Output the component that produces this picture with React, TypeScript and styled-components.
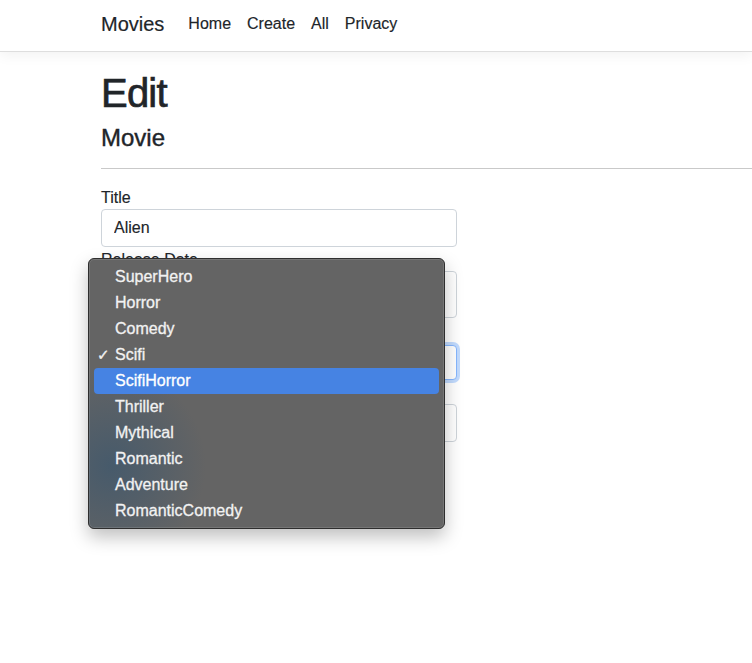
import React from "react";
import styled, { createGlobalStyle } from "styled-components";

const Global = createGlobalStyle`
  html, body { margin: 0; padding: 0; background: #fff; }
  body {
    font-family: "Liberation Sans", Arial, sans-serif;
    color: #212529;
    font-size: 16px;
    line-height: 1.5;
  }
  * { box-sizing: border-box; }
`;

const Page = styled.div`
  position: relative;
  width: 752px;
  height: 663px;
  overflow: hidden;
`;

const NavBar = styled.header`
  height: 52px;
  display: flex;
  align-items: center;
  padding-left: 101px;
  padding-bottom: 4px;
  border-bottom: 1px solid #dedede;
  box-shadow: 0 4px 12px rgba(0, 0, 0, 0.05);
`;

const Brand = styled.span`
  font-size: 20px;
  color: #212529;
  margin-right: 16px;
  line-height: 30px;
  -webkit-text-stroke: 0.2px #212529;
`;

const NavLink = styled.span`
  font-size: 16px;
  color: #212529;
  padding: 0 8px;
  line-height: 24px;
  -webkit-text-stroke: 0.15px #212529;
`;

const Main = styled.main`
  padding-left: 101px;
  padding-top: 17px;
`;

const H1 = styled.h1`
  margin: 0;
  font-size: 40px;
  font-weight: 500;
  line-height: 48px;
  letter-spacing: -0.8px;
  -webkit-text-stroke: 0.7px #212529;
`;

const H4 = styled.h4`
  margin: 6px 0 0;
  font-size: 24px;
  font-weight: 500;
  line-height: 29px;
  -webkit-text-stroke: 0.4px #212529;
`;

const Rule = styled.hr`
  margin: 16px 0 16px;
  border: 0;
  border-top: 1px solid #c9c9c9;
`;

const Form = styled.form`
  width: 356px;
  display: flex;
  flex-direction: column;
`;

const Label = styled.label`
  display: block;
  font-size: 16px;
  line-height: 24px;
  color: #212529;
  padding-top: 1px;
  margin-bottom: -1px;
  -webkit-text-stroke: 0.15px #212529;
`;

const Field = styled.input<{ $h?: number }>`
  display: block;
  width: 100%;
  height: ${(p) => p.$h ?? 38}px;
  padding: 6px 12px;
  font-family: inherit;
  font-size: 16px;
  color: #212529;
  background: #fff;
  border: 1px solid #ced4da;
  border-radius: 4px;
  outline: none;
  -webkit-text-stroke: 0.15px #212529;
`;

const SelectBox = styled.div`
  height: 35px;
  margin-top: 3px;
  border: 1px solid #86b7fe;
  border-radius: 4px;
  box-shadow: 0 0 0 3px rgba(13, 110, 253, 0.25);
  background: #fff;
`;

const Menu = styled.ul`
  position: absolute;
  left: 88px;
  top: 258px;
  width: 357px;
  height: 271px;
  margin: 0;
  padding: 5px 5px 6px;
  list-style: none;
  border-radius: 6px;
  border: 1px solid #2e2e2e;
  background:
    radial-gradient(ellipse 95px 100px at 22px 207px, rgba(58, 86, 110, 0.7), rgba(80, 95, 110, 0) 100%),
    #646464;
  box-shadow: inset 0 0 0 1px rgba(255, 255, 255, 0.12), 0 8px 18px rgba(0, 0, 0, 0.25);
`;

const Item = styled.li<{ $active?: boolean }>`
  position: relative;
  height: 26px;
  display: flex;
  align-items: center;
  padding-left: 21px;
  font-size: 16px;
  border-radius: 4px;
  background: ${(p) => (p.$active ? "#4683e3" : "transparent")};
  color: ${(p) => (p.$active ? "#ffffff" : "#f2f2f2")};
  -webkit-text-stroke: 0.3px ${(p) => (p.$active ? "#ffffff" : "#f2f2f2")};
`;

const Check = styled.span`
  position: absolute;
  left: 3px;
  top: 2px;
  font-family: "DejaVu Sans", sans-serif;
  font-size: 15px;
  font-weight: 400;
`;

const genres = [
  "SuperHero",
  "Horror",
  "Comedy",
  "Scifi",
  "ScifiHorror",
  "Thriller",
  "Mythical",
  "Romantic",
  "Adventure",
  "RomanticComedy",
];

export default function App() {
  return (
    <Page>
      <Global />
      <NavBar>
        <Brand>Movies</Brand>
        <NavLink>Home</NavLink>
        <NavLink>Create</NavLink>
        <NavLink>All</NavLink>
        <NavLink>Privacy</NavLink>
      </NavBar>
      <Main>
        <H1>Edit</H1>
        <H4>Movie</H4>
        <Rule />
        <Form>
          <Label>Title</Label>
          <Field defaultValue="Alien" />
          <Label>Release Date</Label>
          <Field $h={47} defaultValue="" />
          <Label>Genre</Label>
          <SelectBox />
          <Label>Price</Label>
          <Field defaultValue="" />
        </Form>
      </Main>
      <Menu>
        {genres.map((g) => (
          <Item key={g} $active={g === "ScifiHorror"}>
            {g === "Scifi" && <Check>✓</Check>}
            {g}
          </Item>
        ))}
      </Menu>
    </Page>
  );
}
